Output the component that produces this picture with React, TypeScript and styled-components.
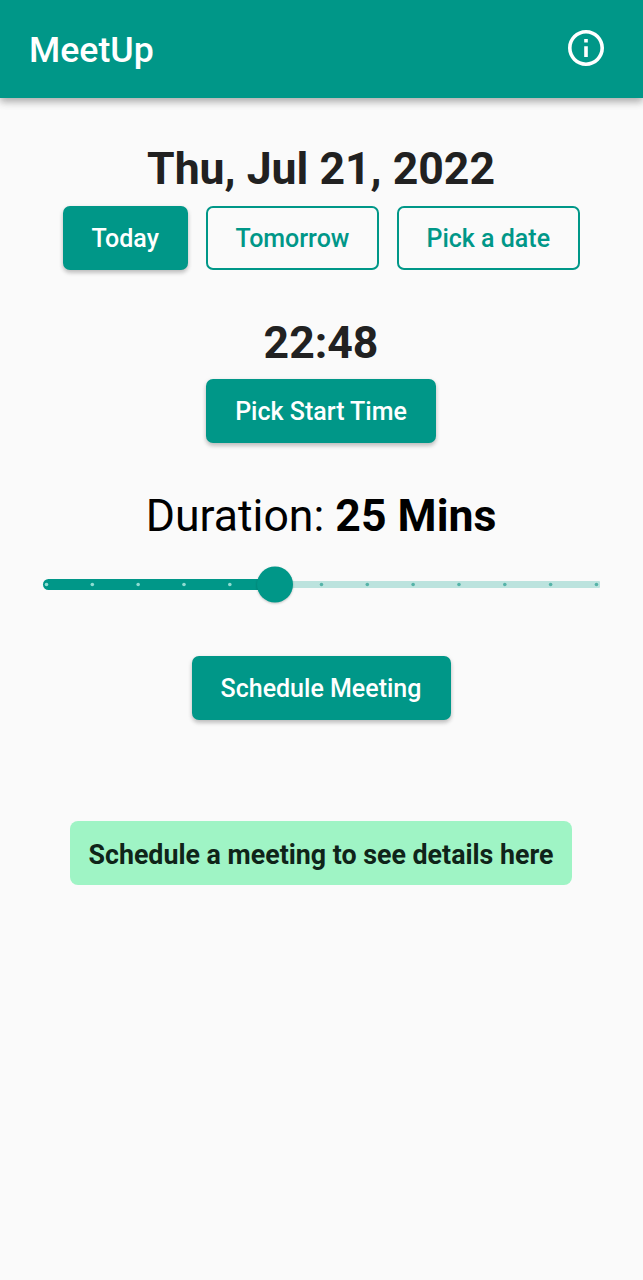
import React from "react";
import styled, { createGlobalStyle } from "styled-components";

const teal = "#009788";

const GlobalStyle = createGlobalStyle`
  * { box-sizing: border-box; }
  body { margin: 0; background: #fafafa; font-family: Roboto, sans-serif; color: #212121; }
`;

const Screen = styled.div`
  width: 100%;
  min-height: 1280px;
  background: #fafafa;
`;

const AppBar = styled.header`
  height: 98px;
  padding: 0 39px 0 29px;
  display: flex;
  align-items: center;
  justify-content: space-between;
  background: ${teal};
  color: #fff;
  box-shadow: 0 4px 7px rgba(0, 0, 0, 0.26), 0 1px 12px rgba(0, 0, 0, 0.1);
`;

const Title = styled.h1`
  margin: 2px 0 0;
  font-size: 35.7px;
  line-height: 42px;
  font-weight: 500;
`;

const InfoIcon = styled.svg`
  width: 36px;
  height: 36px;
  margin-bottom: 2px;
  display: block;
`;

const Main = styled.main`
  padding: 45px 1px 0 0;
  display: flex;
  flex-direction: column;
  align-items: center;
`;

const Section = styled.section<{ $gap: number }>`
  display: flex;
  flex-direction: column;
  align-items: center;
  margin-bottom: ${(p) => p.$gap}px;
`;

const Heading = styled.h2<{ $space: number; $light?: boolean }>`
  margin: 0 0 ${(p) => p.$space}px;
  font-size: 44.6px;
  line-height: 53px;
  font-weight: ${(p) => (p.$light ? 400 : 700)};
  color: ${(p) => (p.$light ? "#000" : "#212121")};
  white-space: nowrap;
`;

const ButtonRow = styled.div`
  display: flex;
  gap: 18px;
`;

const Button = styled.button<{ $width: number; $outlined?: boolean }>`
  width: ${(p) => p.$width}px;
  height: 64px;
  padding: 2px 0 0;
  border: ${(p) => (p.$outlined ? `2px solid ${teal}` : "none")};
  border-radius: 7px;
  background: ${(p) => (p.$outlined ? "transparent" : teal)};
  color: ${(p) => (p.$outlined ? teal : "#fff")};
  box-shadow: ${(p) => (p.$outlined ? "none" : "0 3px 4px rgba(0,0,0,0.2), 0 1px 5px rgba(0,0,0,0.08)")};
  font: 500 25px/30px Roboto, sans-serif;
  white-space: nowrap;
`;

const Slider = styled.svg`
  display: block;
  width: 563px;
  height: 44px;
  margin-left: 1px;
`;

const Thumb = styled.circle`
  fill: ${teal};
  filter: drop-shadow(0 1px 1px rgba(0, 0, 0, 0.22));
`;

const Notice = styled.p`
  margin: 0;
  width: 502px;
  height: 64px;
  padding-top: 4px;
  display: flex;
  align-items: center;
  justify-content: center;
  border-radius: 8px;
  background: #9ff4c5;
  color: #0f2419;
  font-size: 26.77px;
  font-weight: 700;
  white-space: nowrap;
`;

const ticks = Array.from({ length: 13 }, (_, i) => 6.5 + i * 45.83);

export default function App() {
  return (
    <Screen>
      <GlobalStyle />
      <AppBar>
        <Title>MeetUp</Title>
        <InfoIcon viewBox="2 2 20 20" fill="#fff">
          <path d="M11 7h2v2h-2zm0 4h2v6h-2zm1-9C6.48 2 2 6.48 2 12s4.48 10 10 10 10-4.48 10-10S17.52 2 12 2zm0 18c-4.41 0-8-3.59-8-8s3.59-8 8-8 8 3.59 8 8-3.59 8-8 8z" />
        </InfoIcon>
      </AppBar>
      <Main>
        <Section $gap={47}>
          <Heading $space={10}>Thu, Jul 21, 2022</Heading>
          <ButtonRow>
            <Button $width={125.5}>Today</Button>
            <Button $width={173} $outlined>Tomorrow</Button>
            <Button $width={182.5} $outlined>Pick a date</Button>
          </ButtonRow>
        </Section>
        <Section $gap={47}>
          <Heading $space={9}>22:48</Heading>
          <Button $width={230.6}>Pick Start Time</Button>
        </Section>
        <Section $gap={50}>
          <Heading $space={19} $light>Duration: <b>25 Mins</b></Heading>
          <Slider viewBox="0 0 563 44">
            <rect x="235" y="19" width="325" height="7" rx="1" fill="#bce3de" />
            <rect x="3" y="17" width="240" height="11" rx="5.5" fill={teal} />
            {ticks.map((x, i) => (
              <circle key={i} cx={x} cy="22.5" r="1.8" fill={i < 5 ? "#8fdcd2" : "#56b3a8"} />
            ))}
            <Thumb cx="235" cy="22.5" r="18" />
          </Slider>
        </Section>
        <Section $gap={101}>
          <Button $width={259}>Schedule Meeting</Button>
        </Section>
        <Notice>Schedule a meeting to see details here</Notice>
      </Main>
    </Screen>
  );
}
